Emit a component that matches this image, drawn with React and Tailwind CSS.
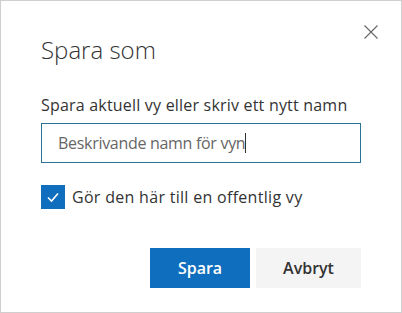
export default function App() {
  return (
    <div
      className="w-[402px] h-[313px] bg-white border border-[#cfcfcf] flex flex-col text-[#333]"
      style={{ fontFamily: '"Open Sans", "Noto Sans", sans-serif' }}
    >
      {/* Header */}
      <div className="flex justify-end pt-[23px] pr-[22px]">
        <button className="w-4 h-4 flex items-center justify-center text-[#666]">
          <svg width="16" height="16" viewBox="0 0 16 16">
            <path d="M1.5 1.5 L14.5 14.5 M14.5 1.5 L1.5 14.5" stroke="currentColor" strokeWidth="1.1" fill="none" />
          </svg>
        </button>
      </div>

      <div className="pl-[40px] pr-[40px]">
        <h1 className="text-[24px] leading-[32px] font-light text-[#333] -mt-[6px]">
          Spara som
        </h1>

        <label className="block mt-[28px] text-[16px] leading-[22px] text-[#333] tracking-[0.2px]">
          Spara aktuell vy eller skriv ett nytt namn
        </label>

        <div className="mt-[7px] w-[320px] h-[40px] border border-[#2a7393] flex items-center pl-[16px]">
          <span className="text-[16px] text-[#666] tracking-[-0.3px]">Beskrivande namn för vyn</span>
          <span className="w-px h-[20px] bg-[#333]" />
        </div>

        <div className="mt-[22px] flex items-center gap-[7px]">
          <div className="w-[24px] h-[24px] bg-[#106ebe] flex items-center justify-center">
            <svg width="14" height="14" viewBox="0 0 14 14">
              <path d="M2 7.5 L5.5 11 L12 3.5" stroke="white" strokeWidth="1.6" fill="none" />
            </svg>
          </div>
          <span className="text-[16px] leading-[24px] text-[#333] tracking-[0.3px]">Gör den här till en offentlig vy</span>
        </div>

        <div className="mt-[39px] flex justify-end gap-[6px] w-[320px]">
          <button className="w-[100px] h-[40px] bg-[#106ebe] text-white text-[16px] font-semibold">
            Spara
          </button>
          <button className="w-[105px] h-[40px] bg-[#f4f4f4] text-[#333] text-[16px] font-semibold">
            Avbryt
          </button>
        </div>
      </div>
    </div>
  );
}
